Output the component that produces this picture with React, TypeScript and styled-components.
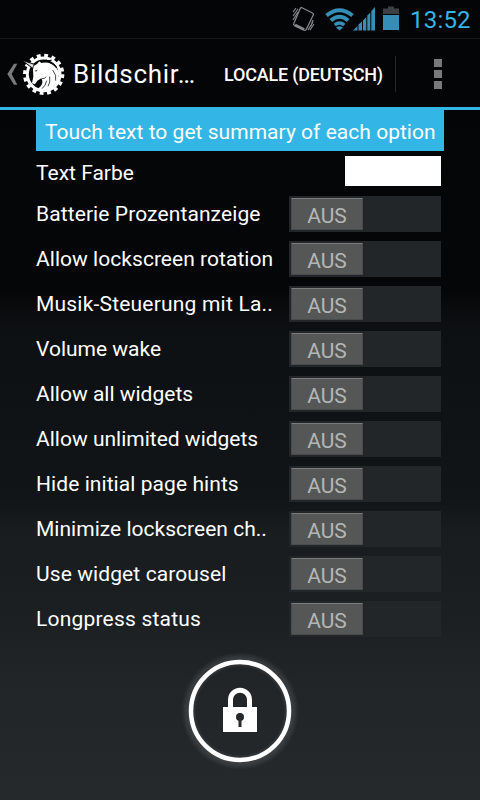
import styled, { createGlobalStyle } from 'styled-components';

const GlobalStyle = createGlobalStyle`
  body {
    margin: 0;
    background: #040507;
    font-family: Roboto, "Liberation Sans", sans-serif;
    color: #fff;
  }
`;

const Screen = styled.div`
  width: 480px;
  height: 800px;
  overflow: hidden;
  display: flex;
  flex-direction: column;
  background: linear-gradient(#040507 0, #050608 290px, #0d1012 330px, #111517 500px, #181c1e 530px, #1b1f21 610px, #212528 680px, #25292c 800px);
`;

const StatusBar = styled.div`
  box-sizing: border-box;
  height: 38px;
  display: flex;
  flex-shrink: 0;
  padding-left: 290px;
  background: #040507;
`;

const Clock = styled.span`
  font-size: 24px;
  line-height: 40px;
  letter-spacing: 0.2px;
  color: #33b5e5;
`;

const ActionBar = styled.div`
  box-sizing: border-box;
  height: 72px;
  display: flex;
  flex-shrink: 0;
  align-items: center;
  padding-top: 2px;
  background: #040507;
  border-top: 1px solid #141618;
  border-bottom: 3px solid #33b5e5;
`;

const Title = styled.h1`
  width: 151px;
  margin: 0 0 0 2px;
  font-size: 26px;
  font-weight: 400;
  line-height: 31px;
  letter-spacing: 0.7px;
  white-space: nowrap;
`;

const ActionButton = styled.button`
  box-sizing: border-box;
  width: 172px;
  height: 36px;
  padding: 0;
  border: 0;
  border-right: 1px solid #26282a;
  background: none;
  color: #fff;
  font: 500 18px/38px Roboto, sans-serif;
  letter-spacing: -0.2px;
  text-align: left;
  white-space: nowrap;
`;

const Overflow = styled.div`
  display: grid;
  gap: 3px;
  margin-left: 38px;
`;

const Dot = styled.span`
  width: 8px;
  height: 8px;
  background: #77797b;
`;

const Content = styled.main`
  width: 408px;
  margin-left: 36px;
`;

const Banner = styled.div`
  height: 41px;
  padding-left: 9px;
  background: #33b5e5;
  font-size: 21px;
  line-height: 45px;
  letter-spacing: 0.03px;
  white-space: nowrap;
`;

const Row = styled.div<{ $height?: number }>`
  height: ${p => p.$height || 45}px;
  display: flex;
  align-items: flex-start;
  justify-content: space-between;
  padding-right: 3px;
`;

const Label = styled.span<{ $spacing?: number; $line?: number }>`
  font-size: 21px;
  line-height: ${p => p.$line || 47}px;
  letter-spacing: ${p => p.$spacing || 0}px;
  white-space: nowrap;
`;

const Swatch = styled.div`
  width: 96px;
  height: 30px;
  margin-top: 5px;
  background: #fff;
`;

const Switch = styled.div`
  box-sizing: border-box;
  width: 152px;
  height: 36px;
  margin-top: 5px;
  padding: 2px;
  background: #222628;
`;

const Thumb = styled.div`
  box-sizing: border-box;
  width: 72px;
  height: 32px;
  border: 1px solid #484b4b;
  border-top-color: #7b7d7d;
  border-radius: 1px;
  background: #555757;
  color: #b4b6b6;
  font-size: 21px;
  line-height: 34px;
  text-align: center;
`;

const LockButton = styled.div`
  display: flex;
  justify-content: center;
  margin-top: 6px;
`;

const options = [
  { name: 'Batterie Prozentanzeige', spacing: 0.1 },
  { name: 'Allow lockscreen rotation', spacing: 0.04 },
  { name: 'Musik-Steuerung mit La..', spacing: 0.2 },
  { name: 'Volume wake', spacing: 0 },
  { name: 'Allow all widgets', spacing: 0 },
  { name: 'Allow unlimited widgets', spacing: 0 },
  { name: 'Hide initial page hints', spacing: 0.07 },
  { name: 'Minimize lockscreen ch..', spacing: 0.02 },
  { name: 'Use widget carousel', spacing: 0.1 },
  { name: 'Longpress status', spacing: 0.2 },
];

const StatusIcons = () => (
  <svg width="120" height="38" viewBox="0 0 120 38">
    <g fill="none" stroke="#85888b">
      <path d="M11.5 7.5 22.5 13Q24 14 23 15.5L16.5 29Q15.500 31 14 30L4.500 25.500Q3 24.500 4 23L10 9Q10.500 7.500 11.500 7.500Z" strokeWidth="1.3" />
      <path d="M5 25 14 29.500" strokeWidth="3" />
      <path d="M3 12 6 8M3 16 8 9M3 20 8 12M18 30 23 22M20 30 24 24M21 26 23 20" strokeWidth="1.2" />
    </g>
    <g fill="none" stroke="#348eb5" strokeWidth="4">
      <path d="M36.500 15.500Q49.500 5 62.500 15.500" />
      <path d="M40.800 20.500Q49.500 13 58.200 20.500" />
      <path d="M44.700 25Q49.500 21 54.300 25" strokeWidth="3.400" />
    </g>
    <path d="M49.500 30.500 46 27.500Q49.500 25 53 27.500Z" fill="#348eb5" />
    <path d="M63 30.500 67.500 26V30.500ZM68.500 30.500V24.500L72 21.500V30.500ZM73 30.500V20.500L76.300 17V30.500ZM77.300 30.500V15.500L80.300 12.500V30.500ZM81.300 30.500V11L85 7V30.500Z" fill="#348eb5" />
    <path d="M98 6.500H104V8.500H109V14H93V8.500H98Z" fill="#3b3f42" />
    <path d="M93 15H109V30H93Z" fill="#348eb5" />
  </svg>
);

const Logo = () => (
  <svg width="71" height="52" viewBox="-48 0 213 156">
    <path d="M-6 47H4L-13 78 4 110H-6L-26 78Z" fill="#77797b" />
    <circle cx="83" cy="79" r="57" fill="none" stroke="#fff" strokeWidth="10" strokeDasharray="11.400 10.984" />
    <circle cx="83" cy="79" r="49" fill="none" stroke="#fff" strokeWidth="9" />
    <path d="M17 36 55 49 50 61Z" fill="#dcdcdc" stroke="#040507" strokeWidth="3" />
    <path d="M53 54Q64 50 70 40L76 45Q99 38 116 54Q129 67 132 86L126 80Q132 96 124 110L121 103Q119 119 103 127Q84 136 62 124Q76 116 79 104Q80 96 76 91L64 98 57 109 48 106 52 86 51 66Z" fill="#fff" />
    <path d="M56 68 65 65 60 71Z" fill="#222527" />
    <path d="M78 92Q87 93 90 86M92 98Q90 112 78 122M101 86Q104 103 96 115M110 66Q123 82 119 98" fill="none" stroke="#222527" strokeWidth="2.500" />
    <path d="M80 41Q107 39 122 59M89 36Q97 40 107 36" fill="none" stroke="#040507" strokeWidth="4" />
  </svg>
);

const LockIcon = () => (
  <svg width="128" height="128" viewBox="0 0 128 128">
    <defs>
      <radialGradient id="glow">
        <stop offset=".7" stopColor="#fff" stopOpacity="0" />
        <stop offset=".78" stopColor="#fff" stopOpacity=".12" />
        <stop offset=".86" stopColor="#fff" stopOpacity=".1" />
        <stop offset=".95" stopColor="#fff" stopOpacity="0" />
      </radialGradient>
    </defs>
    <circle cx="64" cy="64" r="62" fill="url(#glow)" />
    <circle cx="64" cy="64" r="49" fill="none" stroke="#fff" strokeWidth="4.500" />
    <path d="M54.500 61V52.700A9.500 9.500 0 0 1 73.500 52.700V61" fill="none" stroke="#fff" strokeWidth="5" />
    <path d="M47 60H81V85H47Z" fill="#fff" />
    <circle cx="64" cy="70" r="4" fill="#25292c" />
    <path d="M62.500 71H65.500V80H62.500Z" fill="#25292c" />
  </svg>
);

const App = () => {
  return (
    <Screen>
      <GlobalStyle />
      <StatusBar>
        <StatusIcons />
        <Clock>13:52</Clock>
      </StatusBar>
      <ActionBar>
        <Logo />
        <Title>Bildschir…</Title>
        <ActionButton>LOCALE (DEUTSCH)</ActionButton>
        <Overflow>
          <Dot />
          <Dot />
          <Dot />
        </Overflow>
      </ActionBar>
      <Content>
        <Banner>Touch text to get summary of each option</Banner>
        <Row $height={40}>
          <Label $line={45}>Text Farbe</Label>
          <Swatch />
        </Row>
        {options.map(option => (
          <Row key={option.name}>
            <Label $spacing={option.spacing}>{option.name}</Label>
            <Switch>
              <Thumb>AUS</Thumb>
            </Switch>
          </Row>
        ))}
      </Content>
      <LockButton>
        <LockIcon />
      </LockButton>
    </Screen>
  );
};

export default App;
